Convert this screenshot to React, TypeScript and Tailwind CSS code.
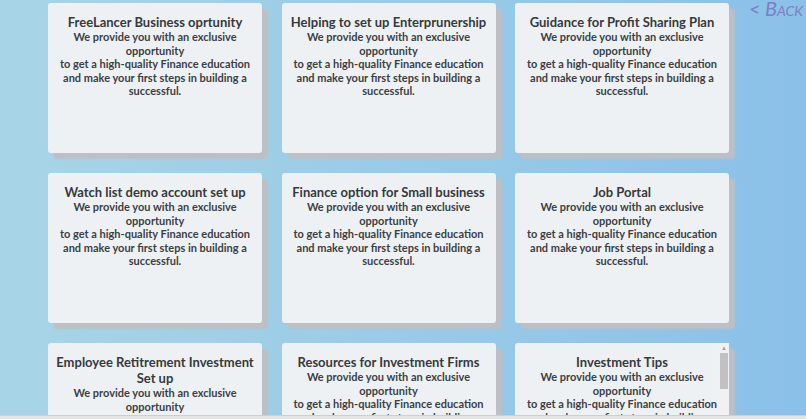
const cards = [
  "FreeLancer Business oprtunity",
  "Helping to set up Enterprunership",
  "Guidance for Profit Sharing Plan",
  "Watch list demo account set up",
  "Finance option for Small business",
  "Job Portal",
  "Employee Retitrement Investment Set up",
  "Resources for Investment Firms",
  "Investment Tips",
];

function Card({ title, scroll }: { title: string; scroll?: boolean }) {
  return (
    <div className="relative h-[150px] rounded-[3px] bg-[#eef1f4] px-[4px] pt-[11px] text-center text-[#3b3f44] shadow-[6px_6px_2px_#bcc0c4]">
      <h3 className="text-[13px] font-bold leading-[16px] text-[#36393d]">{title}</h3>
      <p className="text-[11px] font-bold leading-[13.6px]">
        We provide you with an exclusive opportunity
        <br />
        to get a high-quality Finance education and make your first steps in building a
        successful.
      </p>
      {scroll && (
        <div className="absolute right-0 top-0 flex h-full w-[10px] flex-col items-center bg-[#f1f1f1]">
          <span className="mt-[2px] text-[6px] leading-[6px] text-[#a0a0a0]">▲</span>
          <div className="mt-[2px] h-[36px] w-[8px] bg-[#c1c1c1]" />
        </div>
      )}
    </div>
  );
}

export default function App() {
  return (
    <div
      className="relative h-[419px] w-[806px] overflow-hidden bg-gradient-to-r from-[#a8d5e6] to-[#8bc0e8]"
      style={{ fontFamily: 'Lato, "Noto Sans", sans-serif' }}
    >
      <a className="absolute right-[3px] top-[-3px] text-[20px] italic leading-[22px] text-[#7b7fc6] [font-variant:small-caps]">
        &lt; Back
      </a>
      <div className="h-[415px] overflow-hidden">
        <div className="ml-[48px] grid w-[681px] grid-cols-3 gap-x-[19.5px] gap-y-[20px] pt-[3px]">
          {cards.map((c, i) => (
            <Card key={c} title={c} scroll={i === 8} />
          ))}
        </div>
      </div>
      <div className="h-[4px] border-t border-[#cfcfcf] bg-[#e4e4e4]" />
    </div>
  );
}
